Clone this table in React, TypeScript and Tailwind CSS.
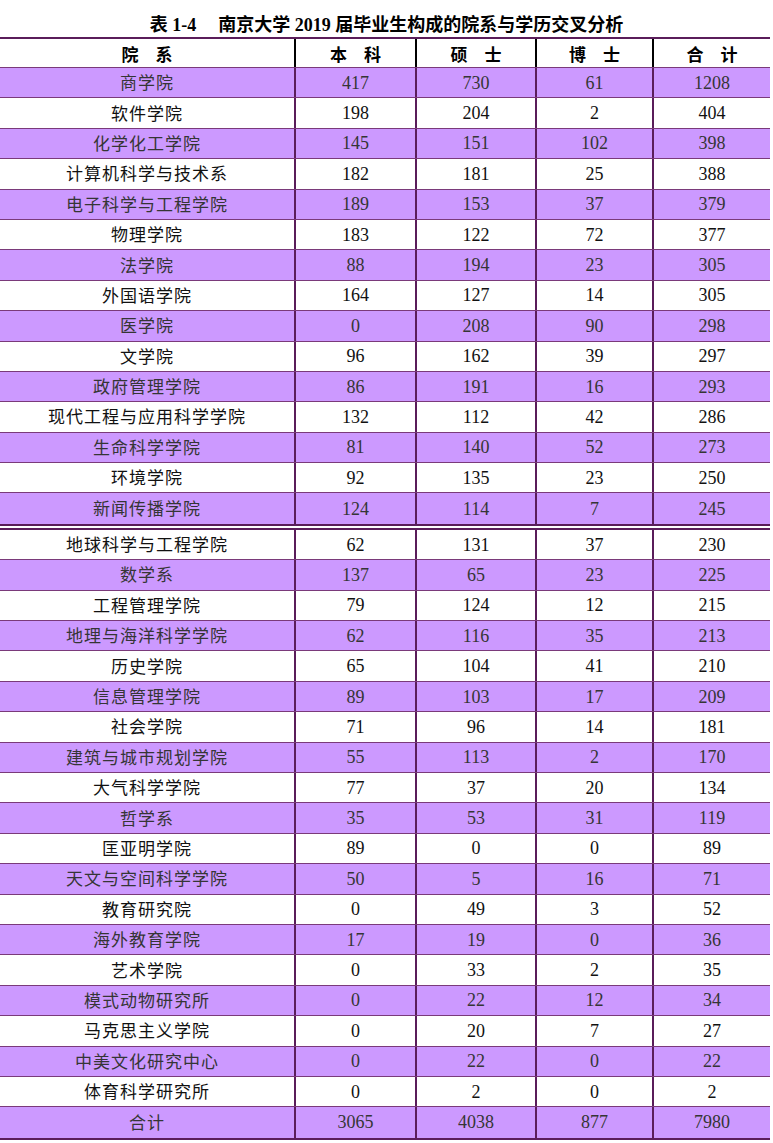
const rows1: [string, number, number, number, number][] = [
  ["商学院", 417, 730, 61, 1208],
  ["软件学院", 198, 204, 2, 404],
  ["化学化工学院", 145, 151, 102, 398],
  ["计算机科学与技术系", 182, 181, 25, 388],
  ["电子科学与工程学院", 189, 153, 37, 379],
  ["物理学院", 183, 122, 72, 377],
  ["法学院", 88, 194, 23, 305],
  ["外国语学院", 164, 127, 14, 305],
  ["医学院", 0, 208, 90, 298],
  ["文学院", 96, 162, 39, 297],
  ["政府管理学院", 86, 191, 16, 293],
  ["现代工程与应用科学学院", 132, 112, 42, 286],
  ["生命科学学院", 81, 140, 52, 273],
  ["环境学院", 92, 135, 23, 250],
  ["新闻传播学院", 124, 114, 7, 245],
];

const rows2: [string, number, number, number, number][] = [
  ["地球科学与工程学院", 62, 131, 37, 230],
  ["数学系", 137, 65, 23, 225],
  ["工程管理学院", 79, 124, 12, 215],
  ["地理与海洋科学学院", 62, 116, 35, 213],
  ["历史学院", 65, 104, 41, 210],
  ["信息管理学院", 89, 103, 17, 209],
  ["社会学院", 71, 96, 14, 181],
  ["建筑与城市规划学院", 55, 113, 2, 170],
  ["大气科学学院", 77, 37, 20, 134],
  ["哲学系", 35, 53, 31, 119],
  ["匡亚明学院", 89, 0, 0, 89],
  ["天文与空间科学学院", 50, 5, 16, 71],
  ["教育研究院", 0, 49, 3, 52],
  ["海外教育学院", 17, 19, 0, 36],
  ["艺术学院", 0, 33, 2, 35],
  ["模式动物研究所", 0, 22, 12, 34],
  ["马克思主义学院", 0, 20, 7, 27],
  ["中美文化研究中心", 0, 22, 0, 22],
  ["体育科学研究所", 0, 2, 0, 2],
  ["合计", 3065, 4038, 877, 7980],
];

const widths = ["w-[296px]", "w-[121px]", "w-[120px]", "w-[117px]", "w-[116px]"];

function Row({ cells, purple, last }: { cells: (string | number)[]; purple: boolean; last?: boolean }) {
  return (
    <div
      className={`flex h-[30.4px] ${last ? "" : "border-b border-[#7a3a7a]"} ${
        purple ? "bg-[#cc99ff] text-[#353535]" : "bg-white text-[#111]"
      }`}
    >
      {cells.map((c, i) => (
        <div
          key={i}
          className={`${widths[i]} flex items-center justify-center leading-none ${
            i < 4 ? "border-r-2 border-[#5a1d5a]" : ""
          } ${
            i === 0
              ? "font-['Noto_Sans_CJK_SC',sans-serif] text-[17px] tracking-[1px] pb-[2px]"
              : "font-['Liberation_Serif',serif] text-[18px]"
          }`}
        >
          {c}
        </div>
      ))}
    </div>
  );
}

export default function App() {
  const head = ["院　系", "本　科", "硕　士", "博　士", "合　计"];
  return (
    <div className="w-[773px] h-[1143px] bg-white pt-[12px]">
      <div className="h-[25px] flex items-center justify-center font-['Liberation_Serif','Noto_Sans_CJK_SC',serif] font-bold text-[18px] text-black whitespace-pre leading-none">
        <span>表 1-4</span>
        <span className="ml-[22px]">南京大学 2019 届毕业生构成的院系与学历交叉分析</span>
      </div>
      <div className="w-[770px]">
        <div className="h-[2px] bg-[#5a1d5a]" />
        <div className="flex h-[29px] border-b border-[#7a3a7a] bg-white">
          {head.map((h, i) => (
            <div
              key={i}
              className={`${widths[i]} flex items-center justify-center font-['Noto_Sans_CJK_SC',sans-serif] font-bold text-[17px] text-black leading-none ${
                i < 4 ? "border-r-2 border-black" : ""
              }`}
            >
              {h}
            </div>
          ))}
        </div>
        {rows1.map((r, i) => (
          <Row key={r[0]} cells={r} purple={i % 2 === 0} last={i === rows1.length - 1} />
        ))}
        <div className="h-[2px] bg-[#5a1d5a]" />
        <div className="h-[2px] bg-white" />
        <div className="h-[2px] bg-[#5a1d5a]" />
        {rows2.map((r, i) => (
          <Row key={r[0]} cells={r} purple={i % 2 === 1} last={i === rows2.length - 1} />
        ))}
        <div className="h-[2px] bg-[#5a1d5a]" />
      </div>
    </div>
  );
}
